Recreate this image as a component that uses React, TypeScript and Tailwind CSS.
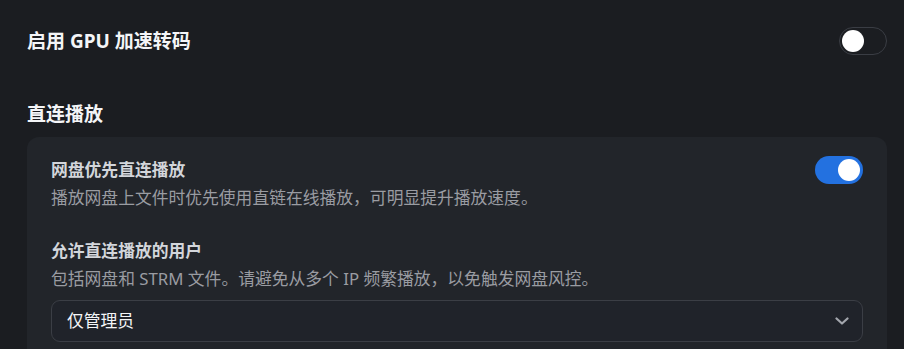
import React from "react";

const font = { fontFamily: '"Noto Sans", "Noto Sans CJK SC", sans-serif' };

function Toggle({ on }: { on: boolean }) {
  return on ? (
    <div className="relative h-[28px] w-[48px] shrink-0 rounded-full bg-[#2371e0]">
      <div className="absolute right-[3px] top-[3px] h-[22px] w-[22px] rounded-full bg-white" />
    </div>
  ) : (
    <div className="relative h-[28px] w-[48px] shrink-0 rounded-full border border-[#3a3d44] bg-transparent">
      <div className="absolute left-[2px] top-[2px] h-[22px] w-[22px] rounded-full bg-white" />
    </div>
  );
}

export default function App() {
  return (
    <div
      className="h-[349px] w-full overflow-hidden bg-[#1b1d21] pl-[27px] pr-[17px] pt-[27px]"
      style={font}
    >
      <div className="flex h-[28px] items-center justify-between">
        <div className="text-[19px] font-bold leading-[28px] text-[#f4f5f7]">启用 GPU 加速转码</div>
        <Toggle on={false} />
      </div>

      <div className="mt-[45px] text-[19px] font-bold leading-[28px] text-[#f4f5f7]">直连播放</div>

      <div className="mt-[9px] rounded-t-[12px] bg-[#22252a] px-[24px] pt-[19px] pb-[20px]">
        <div className="flex items-center justify-between">
          <div className="text-[16.8px] font-bold leading-[28px] text-[#d3d6db]">网盘优先直连播放</div>
          <Toggle on={true} />
        </div>
        <div className="text-[16.8px] leading-[28px] text-[#9a9ca2]">
          播放网盘上文件时优先使用直链在线播放，可明显提升播放速度。
        </div>

        <div className="mt-[25px] text-[16.8px] font-bold leading-[28px] text-[#d3d6db]">允许直连播放的用户</div>
        <div className="text-[16.8px] leading-[28px] text-[#9a9ca2]">
          包括网盘和 STRM 文件。请避免从多个 IP 频繁播放，以免触发网盘风控。
        </div>

        <div className="mt-[7px] flex h-[42px] items-center justify-between rounded-[9px] border border-[#3b3e45] bg-[#20232a] pl-[15px] pr-[13px]">
          <span className="text-[16.8px] text-[#f4f5f7]">仅管理员</span>
          <svg width="14" height="8" viewBox="0 0 14 8" fill="none">
            <path d="M1.5 1.5 L7 6.5 L12.5 1.5" stroke="#a3a6ad" strokeWidth="2.2" strokeLinecap="round" strokeLinejoin="round" />
          </svg>
        </div>
      </div>
    </div>
  );
}
